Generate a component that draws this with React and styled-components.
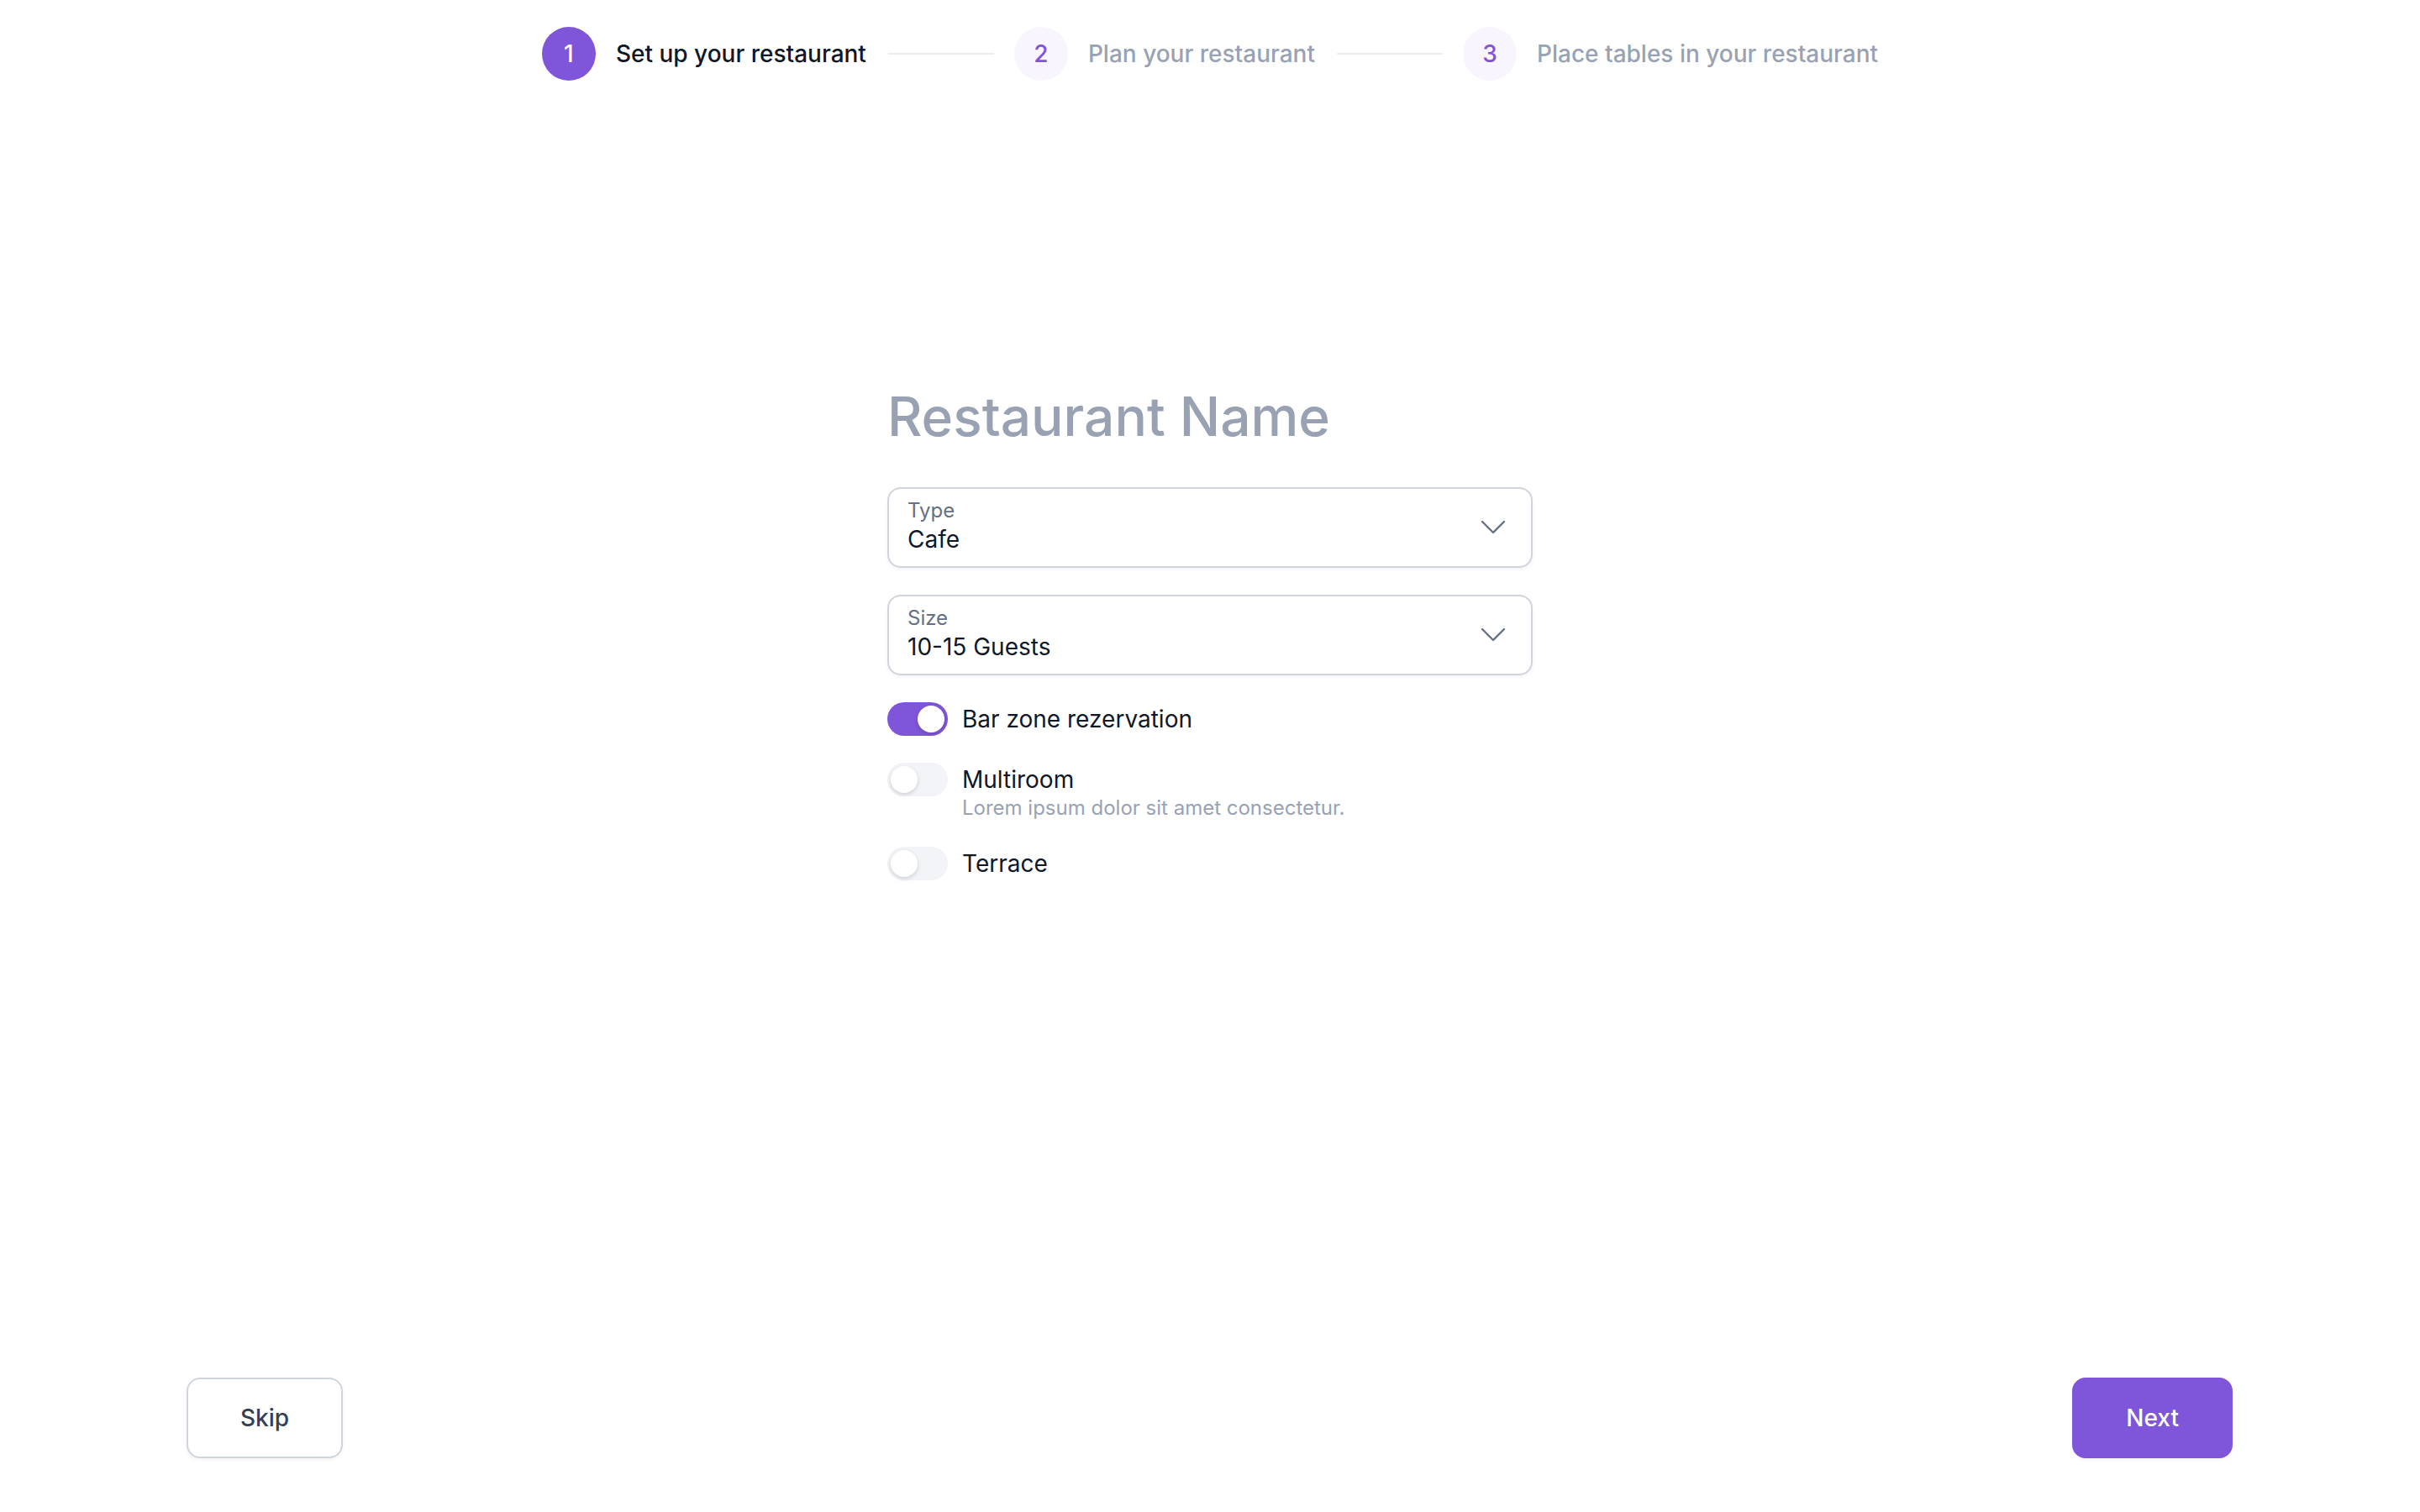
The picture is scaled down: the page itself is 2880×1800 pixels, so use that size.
import React from "react";
import styled, { createGlobalStyle } from "styled-components";

const GlobalStyle = createGlobalStyle`
  html, body { margin: 0; padding: 0; background: #ffffff; }
  body { font-family: Inter, "Noto Sans", sans-serif; color: #101828; }
  * { box-sizing: border-box; }
`;

const Page = styled.div`
  min-height: 100vh;
  display: flex;
  flex-direction: column;
`;

const Stepper = styled.nav`
  display: flex;
  justify-content: center;
  align-items: center;
  gap: 24px;
  padding-top: 32px;
`;

const Step = styled.div`
  display: flex;
  align-items: center;
  gap: 24px;
`;

const StepCircle = styled.div`
  width: 64px;
  height: 64px;
  border-radius: 50%;
  display: flex;
  align-items: center;
  justify-content: center;
  font-size: 28px;
  font-weight: 500;
  background: ${(p) => (p.$active ? "#7F56D9" : "#F9F5FF")};
  color: ${(p) => (p.$active ? "#FFFFFF" : "#7F56D9")};
`;

const StepLabel = styled.span`
  font-size: 28px;
  line-height: 40px;
  font-weight: 500;
  color: ${(p) => (p.$active ? "#101828" : "#98A2B3")};
`;

const Connector = styled.div`
  width: 126px;
  height: 2px;
  background: #EAECF0;
  margin-left: 2px;
`;

const Main = styled.main`
  display: flex;
  justify-content: center;
  padding-top: 360px;
`;

const Form = styled.div`
  width: 768px;
  display: flex;
  flex-direction: column;
  gap: 32px;
`;

const Title = styled.h1`
  margin: 0 0 12px;
  font-size: 64px;
  line-height: 80px;
  font-weight: 500;
  color: #98A2B3;
`;

const SelectBox = styled.div`
  height: 96px;
  border: 2px solid #D0D5DD;
  border-radius: 16px;
  padding: 12px 30px 12px 22px;
  display: flex;
  align-items: center;
  justify-content: space-between;
  box-shadow: 0 2px 4px rgba(16, 24, 40, 0.05);
  background: #fff;
`;

const SelectText = styled.div`
  display: flex;
  flex-direction: column;
`;

const SelectLabel = styled.span`
  font-size: 24px;
  line-height: 28px;
  color: #667085;
`;

const SelectValue = styled.span`
  font-size: 28px;
  line-height: 40px;
  color: #101828;
`;

const ToggleRow = styled.div`
  display: flex;
  align-items: flex-start;
  gap: 17px;
`;

const Track = styled.div`
  flex: none;
  width: 72px;
  height: 40px;
  border-radius: 20px;
  padding: 4px;
  display: flex;
  justify-content: ${(p) => (p.$on ? "flex-end" : "flex-start")};
  background: ${(p) => (p.$on ? "#7F56D9" : "#F2F4F7")};
`;

const Knob = styled.div`
  width: 32px;
  height: 32px;
  border-radius: 50%;
  background: #fff;
  box-shadow: 0 2px 6px rgba(16, 24, 40, 0.1), 0 2px 4px rgba(16, 24, 40, 0.06);
`;

const ToggleText = styled.div`
  display: flex;
  flex-direction: column;
`;

const ToggleLabel = styled.span`
  font-size: 28px;
  line-height: 40px;
  color: #101828;
`;

const ToggleHint = styled.span`
  font-size: 24px;
  line-height: 28px;
  color: #98A2B3;
`;

const Footer = styled.footer`
  margin-top: auto;
  display: flex;
  justify-content: space-between;
  padding: 0 223px 64px 222px;
`;

const Button = styled.button`
  height: 96px;
  padding: 0 62px;
  border-radius: 16px;
  font-family: Inter, "Noto Sans", sans-serif;
  font-size: 28px;
  font-weight: 500;
  cursor: pointer;
  box-shadow: 0 2px 4px rgba(16, 24, 40, 0.05);
  border: 2px solid ${(p) => (p.$primary ? "#7F56D9" : "#D0D5DD")};
  background: ${(p) => (p.$primary ? "#7F56D9" : "#FFFFFF")};
  color: ${(p) => (p.$primary ? "#FFFFFF" : "#344054")};
`;

const Chevron = () => (
  <svg width="30" height="18" viewBox="0 0 30 18" fill="none">
    <polyline
      points="2,2 15,15 28,2"
      stroke="#667085"
      strokeWidth="2.4"
      strokeLinecap="round"
      strokeLinejoin="round"
    />
  </svg>
);

const steps = [
  "Set up your restaurant",
  "Plan your restaurant",
  "Place tables in your restaurant",
];

const Toggle = ({ on, label, hint }) => (
  <ToggleRow>
    <Track $on={on}>
      <Knob />
    </Track>
    <ToggleText>
      <ToggleLabel>{label}</ToggleLabel>
      {hint && <ToggleHint>{hint}</ToggleHint>}
    </ToggleText>
  </ToggleRow>
);

const Select = ({ label, value }) => (
  <SelectBox>
    <SelectText>
      <SelectLabel>{label}</SelectLabel>
      <SelectValue>{value}</SelectValue>
    </SelectText>
    <Chevron />
  </SelectBox>
);

export default function App() {
  return (
    <Page>
      <GlobalStyle />
      <Stepper>
        {steps.map((s, i) => (
          <React.Fragment key={s}>
            {i > 0 && <Connector />}
            <Step>
              <StepCircle $active={i === 0}>{i + 1}</StepCircle>
              <StepLabel $active={i === 0}>{s}</StepLabel>
            </Step>
          </React.Fragment>
        ))}
      </Stepper>
      <Main>
        <Form>
          <Title>Restaurant Name</Title>
          <Select label="Type" value="Cafe" />
          <Select label="Size" value="10-15 Guests" />
          <Toggle on label="Bar zone rezervation" />
          <Toggle label="Multiroom" hint="Lorem ipsum dolor sit amet consectetur." />
          <Toggle label="Terrace" />
        </Form>
      </Main>
      <Footer>
        <Button>Skip</Button>
        <Button $primary>Next</Button>
      </Footer>
    </Page>
  );
}
